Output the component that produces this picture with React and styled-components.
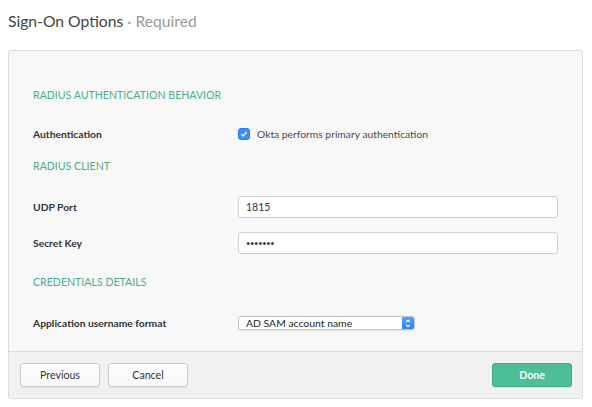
import React from 'react'
import styled, { createGlobalStyle } from 'styled-components'

const GlobalStyle = createGlobalStyle`
  html, body {
    margin: 0;
    padding: 0;
    background: #ffffff;
  }
  body {
    font-family: Lato, 'Open Sans', 'Liberation Sans', sans-serif;
    color: #333333;
  }
  * {
    box-sizing: border-box;
  }
`

const Page = styled.div`
  width: 592px;
  padding: 11px 9px 0 8px;
`

const Title = styled.h1`
  margin: 0;
  height: 20px;
  line-height: 20px;
  font-size: 15.7px;
  font-weight: 400;
  color: #444444;

  span {
    color: #9a9a9a;
  }
`

const Panel = styled.section`
  margin-top: 19px;
  border: 1px solid #dcdcdc;
  border-radius: 3px;
  background: #f8f8f8;
  overflow: hidden;
`

const Body = styled.div`
  padding: 36px 24px 17px 24px;
`

const SectionTitle = styled.h2`
  margin: ${(p) => p.$top || 0}px 0 0;
  height: 16px;
  line-height: 16px;
  font-size: 10.6px;
  font-weight: 400;
  color: #4aae8c;
  text-transform: uppercase;
`

const Row = styled.div`
  margin-top: ${(p) => p.$top || 0}px;
  display: grid;
  grid-template-columns: 205px 320px;
  align-items: center;
  min-height: ${(p) => p.$h || 16}px;
`

const Label = styled.label`
  font-size: 10.3px;
  font-weight: 700;
  color: #333333;
`

const CheckLine = styled.div`
  display: flex;
  align-items: center;
  gap: 7px;
  font-size: 10.3px;
  color: #4a4a4a;
`

const CheckBox = styled.span`
  width: 12px;
  height: 12px;
  border-radius: 3px;
  background: #3d8ef7;
  border: 1px solid #2d7ee6;
  display: flex;
  align-items: center;
  justify-content: center;
`

const Input = styled.input`
  width: 320px;
  height: 22px;
  padding: 0 7px;
  border: 1px solid #cfcfcf;
  border-radius: 3px;
  background: #ffffff;
  font-family: inherit;
  font-size: ${(p) => (p.$masked ? '7.5px' : '10.5px')};
  letter-spacing: ${(p) => (p.$masked ? '-0.3px' : '0')};
  color: #333333;
  outline: none;
`

const Select = styled.div`
  width: 177px;
  height: 14px;
  display: flex;
  align-items: stretch;
  border: 1px solid #c4c4c4;
  border-radius: 3px;
  background: #ffffff;
  overflow: hidden;
  box-shadow: 0 1px 1px rgba(0, 0, 0, 0.08);
`

const SelectText = styled.span`
  flex: 1;
  padding-left: 7px;
  font-size: 10.4px;
  line-height: 12px;
  color: #222222;
`

const SelectArrows = styled.span`
  width: 12px;
  background: linear-gradient(#5aa2fb, #2a7ef4);
  display: flex;
  align-items: center;
  justify-content: center;
`

const Footer = styled.div`
  border-top: 1px solid #dcdcdc;
  background: #f1f1f1;
  padding: 11px 10px 11px 11px;
  display: flex;
  align-items: center;
  gap: 8px;
`

const Button = styled.button`
  width: 80px;
  height: 24px;
  border-radius: 3px;
  font-family: inherit;
  font-size: 10.6px;
  cursor: pointer;
  border: 1px solid ${(p) => (p.$primary ? '#3fa982' : '#c9c9c9')};
  background: ${(p) => (p.$primary ? '#4cbe98' : 'linear-gradient(#ffffff, #f7f7f7)')};
  color: ${(p) => (p.$primary ? '#ffffff' : '#333333')};
  font-weight: ${(p) => (p.$primary ? 700 : 400)};
  margin-left: ${(p) => (p.$push ? 'auto' : '0')};
  box-shadow: 0 1px 1px rgba(0, 0, 0, 0.06);
`

const App = () => {
  return (
    <>
      <GlobalStyle />
      <Page>
        <Title>
          Sign-On Options <span>· Required</span>
        </Title>
        <Panel>
          <Body>
            <SectionTitle>Radius Authentication Behavior</SectionTitle>

            <Row $top={23}>
              <Label>Authentication</Label>
              <CheckLine>
                <CheckBox>
                  <svg width='8' height='8' viewBox='0 0 8 8'>
                    <path d='M1.5 4.2 L3.3 6 L6.6 1.8' fill='none' stroke='#fff' strokeWidth='1.3' />
                  </svg>
                </CheckBox>
                Okta performs primary authentication
              </CheckLine>
            </Row>

            <SectionTitle $top={16}>Radius Client</SectionTitle>

            <Row $top={22} $h={22}>
              <Label>UDP Port</Label>
              <Input defaultValue='1815' />
            </Row>

            <Row $top={14} $h={22}>
              <Label>Secret Key</Label>
              <Input $masked readOnly value='•••••••' />
            </Row>

            <SectionTitle $top={20}>Credentials Details</SectionTitle>

            <Row $top={22} $h={22}>
              <Label>Application username format</Label>
              <Select>
                <SelectText>AD SAM account name</SelectText>
                <SelectArrows>
                  <svg width='6' height='9' viewBox='0 0 6 9'>
                    <path d='M1 3.2 L3 1.3 L5 3.2 M1 5.8 L3 7.7 L5 5.8' fill='none' stroke='#fff' strokeWidth='1.1' />
                  </svg>
                </SelectArrows>
              </Select>
            </Row>
          </Body>
          <Footer>
            <Button>Previous</Button>
            <Button>Cancel</Button>
            <Button $primary $push>
              Done
            </Button>
          </Footer>
        </Panel>
      </Page>
    </>
  )
}

export default App
